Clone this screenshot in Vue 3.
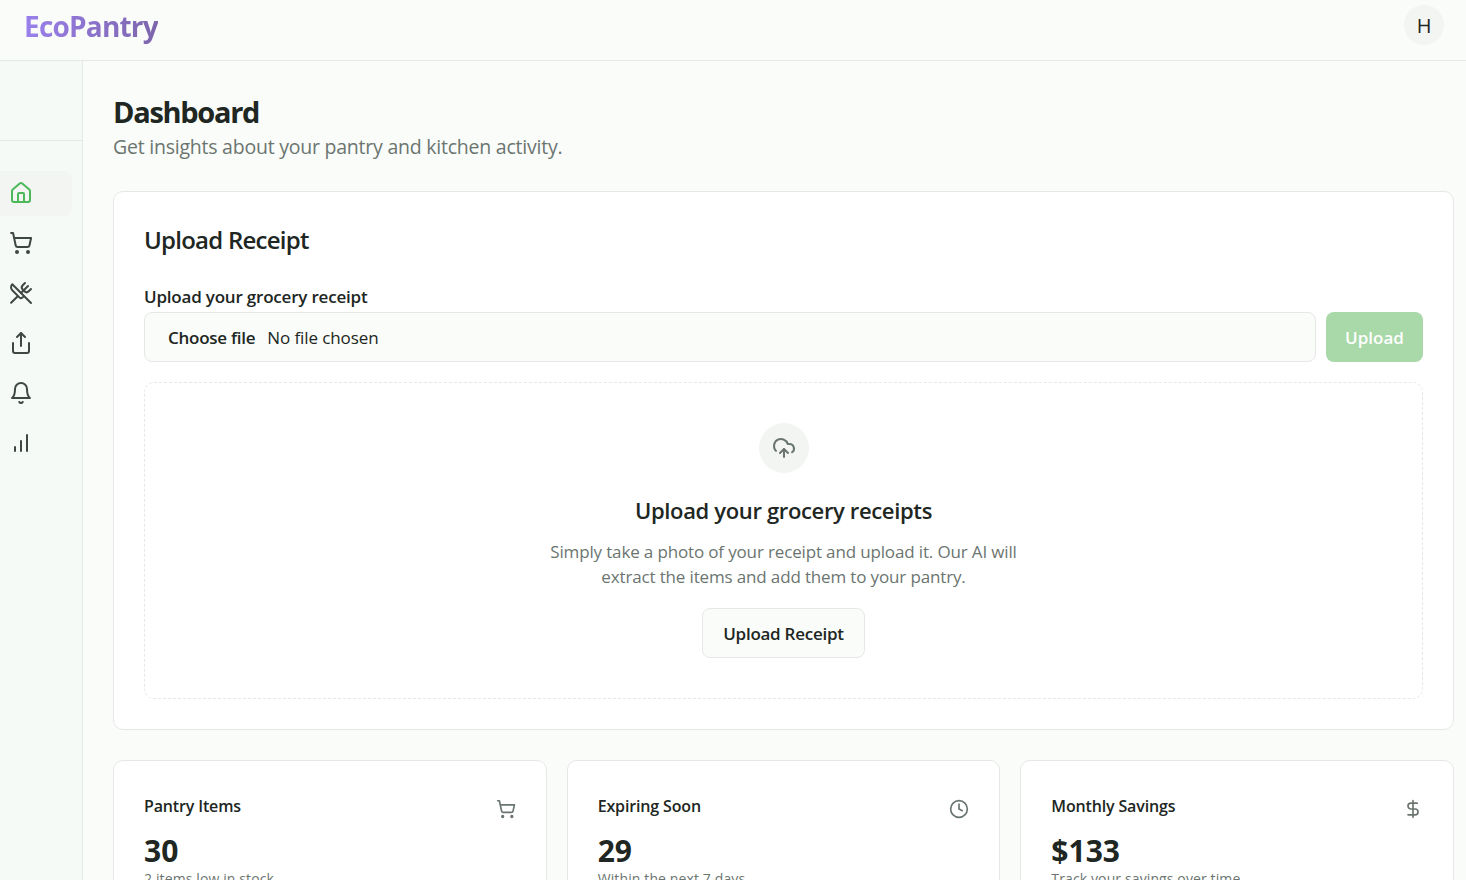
<script setup>
const cart = ['M2.05 2.05h2l2.66 12.42a2 2 0 0 0 2 1.58h9.78a2 2 0 0 0 1.95-1.57l1.65-7.43H5.12']
const cartDots = [[8, 21], [19, 21]]
const nav = [
  { id: 'home', active: true, paths: ['M15 21v-8a1 1 0 0 0-1-1h-4a1 1 0 0 0-1 1v8', 'M3 10a2 2 0 0 1 .709-1.528l7-5.999a2 2 0 0 1 2.582 0l7 5.999A2 2 0 0 1 21 10v9a2 2 0 0 1-2 2H5a2 2 0 0 1-2-2z'] },
  { id: 'cart', paths: cart, dots: cartDots },
  { id: 'utensils', paths: ['m16 2-2.3 2.3a3 3 0 0 0 0 4.2l1.8 1.8a3 3 0 0 0 4.2 0L22 8', 'M15 15 3.3 3.3a4.2 4.2 0 0 0 0 6l7.3 7.3c.7.7 2 .7 2.8 0L15 15Zm0 0 7 7', 'm2.1 21.8 6.4-6.3', 'm19 5-7 7'] },
  { id: 'share', paths: ['M4 12v8a2 2 0 0 0 2 2h12a2 2 0 0 0 2-2v-8', 'M16 6l-4-4-4 4', 'M12 2v13'] },
  { id: 'bell', paths: ['M6 8a6 6 0 0 1 12 0c0 7 3 9 3 9H3s3-2 3-9', 'M10.3 21a1.94 1.94 0 0 0 3.4 0'] },
  { id: 'chart', paths: ['M6 20v-4', 'M12 20V10', 'M18 20V4'] }
]
const stats = [
  { title: 'Pantry Items', value: '30', note: '2 items low in stock', paths: cart, dots: cartDots },
  { title: 'Expiring Soon', value: '29', note: 'Within the next 7 days', paths: ['M12 22a10 10 0 1 0 0-20 10 10 0 0 0 0 20Z', 'M12 6v6l4 2'] },
  { title: 'Monthly Savings', value: '$133', note: 'Track your savings over time', paths: ['M12 2v20', 'M17 5H9.5a3.5 3.5 0 0 0 0 7h5a3.5 3.5 0 0 1 0 7H6'] }
]
</script>

<template>
  <div class="app">
    <header class="topbar">
      <span class="logo">EcoPantry</span>
      <span class="avatar">H</span>
    </header>
    <div class="body">
      <aside class="sidebar">
        <div class="side-top"></div>
        <nav class="side-nav">
          <a v-for="item in nav" :key="item.id" class="nav-item" :class="{ active: item.active }">
            <svg class="nav-icon" viewBox="0 0 24 24" fill="none" stroke="currentColor" stroke-width="2" stroke-linecap="round" stroke-linejoin="round">
              <path v-for="d in item.paths" :key="d" :d="d" />
              <circle v-for="c in item.dots" :key="c[0]" :cx="c[0]" :cy="c[1]" r="1" />
            </svg>
          </a>
        </nav>
      </aside>
      <main class="main">
        <h1 class="page-title">Dashboard</h1>
        <p class="page-sub">Get insights about your pantry and kitchen activity.</p>

        <section class="card upload-card">
          <h2 class="card-title">Upload Receipt</h2>
          <div class="field-label">Upload your grocery receipt</div>
          <div class="file-row">
            <div class="file-input">
              <span class="file-btn">Choose file</span>
              <span class="file-name">No file chosen</span>
            </div>
            <button class="btn-upload" disabled>Upload</button>
          </div>
          <div class="dropzone">
            <div class="drop-circle">
              <svg class="drop-icon" viewBox="0 0 24 24" fill="none" stroke="currentColor" stroke-width="2" stroke-linecap="round" stroke-linejoin="round">
                <path d="M12 13v8" />
                <path d="M4 14.899A7 7 0 1 1 15.71 8h1.79a4.5 4.5 0 0 1 2.5 8.242" />
                <path d="m8 17 4-4 4 4" />
              </svg>
            </div>
            <h3 class="drop-title">Upload your grocery receipts</h3>
            <p class="drop-text">Simply take a photo of your receipt and upload it. Our AI will extract the items and add them to your pantry.</p>
            <button class="btn-outline">Upload Receipt</button>
          </div>
        </section>

        <section class="stats">
          <article v-for="s in stats" :key="s.title" class="card stat">
            <div class="stat-head">
              <h3 class="stat-title">{{ s.title }}</h3>
              <svg class="stat-icon" viewBox="0 0 24 24" fill="none" stroke="currentColor" stroke-width="2" stroke-linecap="round" stroke-linejoin="round">
                <path v-for="d in s.paths" :key="d" :d="d" />
                <circle v-for="c in s.dots" :key="c[0]" :cx="c[0]" :cy="c[1]" r="1" />
              </svg>
            </div>
            <div class="stat-value">{{ s.value }}</div>
            <p class="stat-note">{{ s.note }}</p>
          </article>
        </section>
      </main>
    </div>
  </div>
</template>

<style>
html, body { margin: 0; height: 100%; overflow: hidden; background: #fafcf9; }
</style>

<style scoped>
* { box-sizing: border-box; }
.app {
  height: 880px;
  overflow: hidden;
  display: flex;
  flex-direction: column;
  font-family: "Open Sans", "Noto Sans", sans-serif;
  color: #202622;
  background: #fafcf9;
}
.topbar {
  height: 61px;
  flex: none;
  display: flex;
  align-items: center;
  justify-content: space-between;
  padding: 0 22px 10px 24px;
  border-bottom: 1px solid #e6e8e6;
}
.logo {
  font-size: 28px;
  font-weight: 700;
  line-height: 38px;
  letter-spacing: -0.8px;
  margin-top: 2px;
  background: linear-gradient(90deg, #9a80ec, #7c65ab);
  -webkit-background-clip: text;
  background-clip: text;
  color: transparent;
}
.avatar {
  width: 40px;
  height: 40px;
  border-radius: 50%;
  background: #f3f5f3;
  display: flex;
  align-items: center;
  justify-content: center;
  font-size: 20px;
}
.body { flex: 1; display: flex; min-height: 0; }
.sidebar {
  width: 83px;
  flex: none;
  background: #f5faf6;
  border-right: 1px solid #e2e8e4;
}
.side-top { height: 80px; border-bottom: 1px solid #e6e8e6; }
.side-nav { padding-top: 30px; display: flex; flex-direction: column; gap: 5px; }
.nav-item {
  width: 72px;
  height: 45px;
  display: flex;
  align-items: center;
  padding: 0 0 1px 9px;
  border-radius: 0 8px 8px 0;
  color: #3f4742;
}
.nav-item.active { background: #f3f5f3; color: #4cb85a; }
.nav-icon { width: 24px; height: 24px; }
.main { flex: 1; min-width: 0; padding: 30px 12px 0 30px; }
.page-title { margin: 0 0 2px; font-size: 29px; line-height: 41px; font-weight: 700; letter-spacing: -1.3px; }
.page-sub { margin: 0 0 32px; font-size: 19.5px; line-height: 25px; letter-spacing: -0.23px; color: #6b7570; }
.card { background: #fff; border: 1px solid #e6e8e6; border-radius: 10px; }
.upload-card { height: 539px; padding: 30px; }
.card-title { margin: 0 0 29px; font-size: 24px; line-height: 36px; font-weight: 600; letter-spacing: -0.75px; }
.field-label { font-size: 17px; line-height: 20px; font-weight: 600; letter-spacing: -0.2px; margin-bottom: 5px; }
.file-row { display: flex; gap: 10px; }
.file-input {
  flex: 1;
  min-width: 0;
  height: 50px;
  border: 1px solid #e6e8e6;
  border-radius: 8px;
  background: #fafcf9;
  padding: 0 23px;
  display: flex;
  align-items: center;
  gap: 12px;
  font-size: 17px;
}
.file-btn { font-weight: 600; letter-spacing: -0.27px; }
.file-name { letter-spacing: -0.1px; }
.btn-upload {
  width: 97px;
  height: 50px;
  border: 0;
  border-radius: 8px;
  background: #a9d8a9;
  color: #fff;
  font: inherit;
  font-size: 17px;
  font-weight: 600;
}
.dropzone {
  margin-top: 20px;
  height: 317px;
  border: 1px dashed #e6e8e6;
  border-radius: 10px;
  padding-top: 40px;
  display: flex;
  flex-direction: column;
  align-items: center;
}
.drop-circle {
  width: 50px;
  height: 50px;
  border-radius: 50%;
  background: #f3f5f3;
  display: flex;
  align-items: center;
  justify-content: center;
  color: #6b7570;
}
.drop-icon { width: 24px; height: 24px; }
.drop-title { margin: 19px 0 11px; font-size: 22px; line-height: 36px; font-weight: 600; letter-spacing: -0.35px; }
.drop-text { margin: 0 0 19px; width: 490px; text-align: center; font-size: 17px; line-height: 25px; letter-spacing: -0.15px; color: #6b7570; }
.btn-outline {
  width: 163px;
  height: 50px;
  border: 1px solid #e6e8e6;
  border-radius: 8px;
  background: #fafcf9;
  color: #202622;
  font: inherit;
  font-size: 17px;
  font-weight: 600;
  letter-spacing: -0.25px;
}
.stats { margin-top: 30px; display: grid; grid-template-columns: repeat(3, 1fr); gap: 20px; }
.stat { padding: 30px; height: 160px; }
.stat-head { display: flex; justify-content: space-between; align-items: flex-start; }
.stat-title { margin: 0; font-size: 16px; line-height: 30px; font-weight: 600; letter-spacing: -0.15px; }
.stat-icon { width: 20px; height: 20px; margin-top: 8px; color: #6b7570; }
.stat-value { font-size: 30px; line-height: 36px; font-weight: 700; margin-top: 12px; }
.stat-note { margin: 0; font-size: 14px; line-height: 20px; letter-spacing: 0.12px; color: #6b7570; }
</style>
